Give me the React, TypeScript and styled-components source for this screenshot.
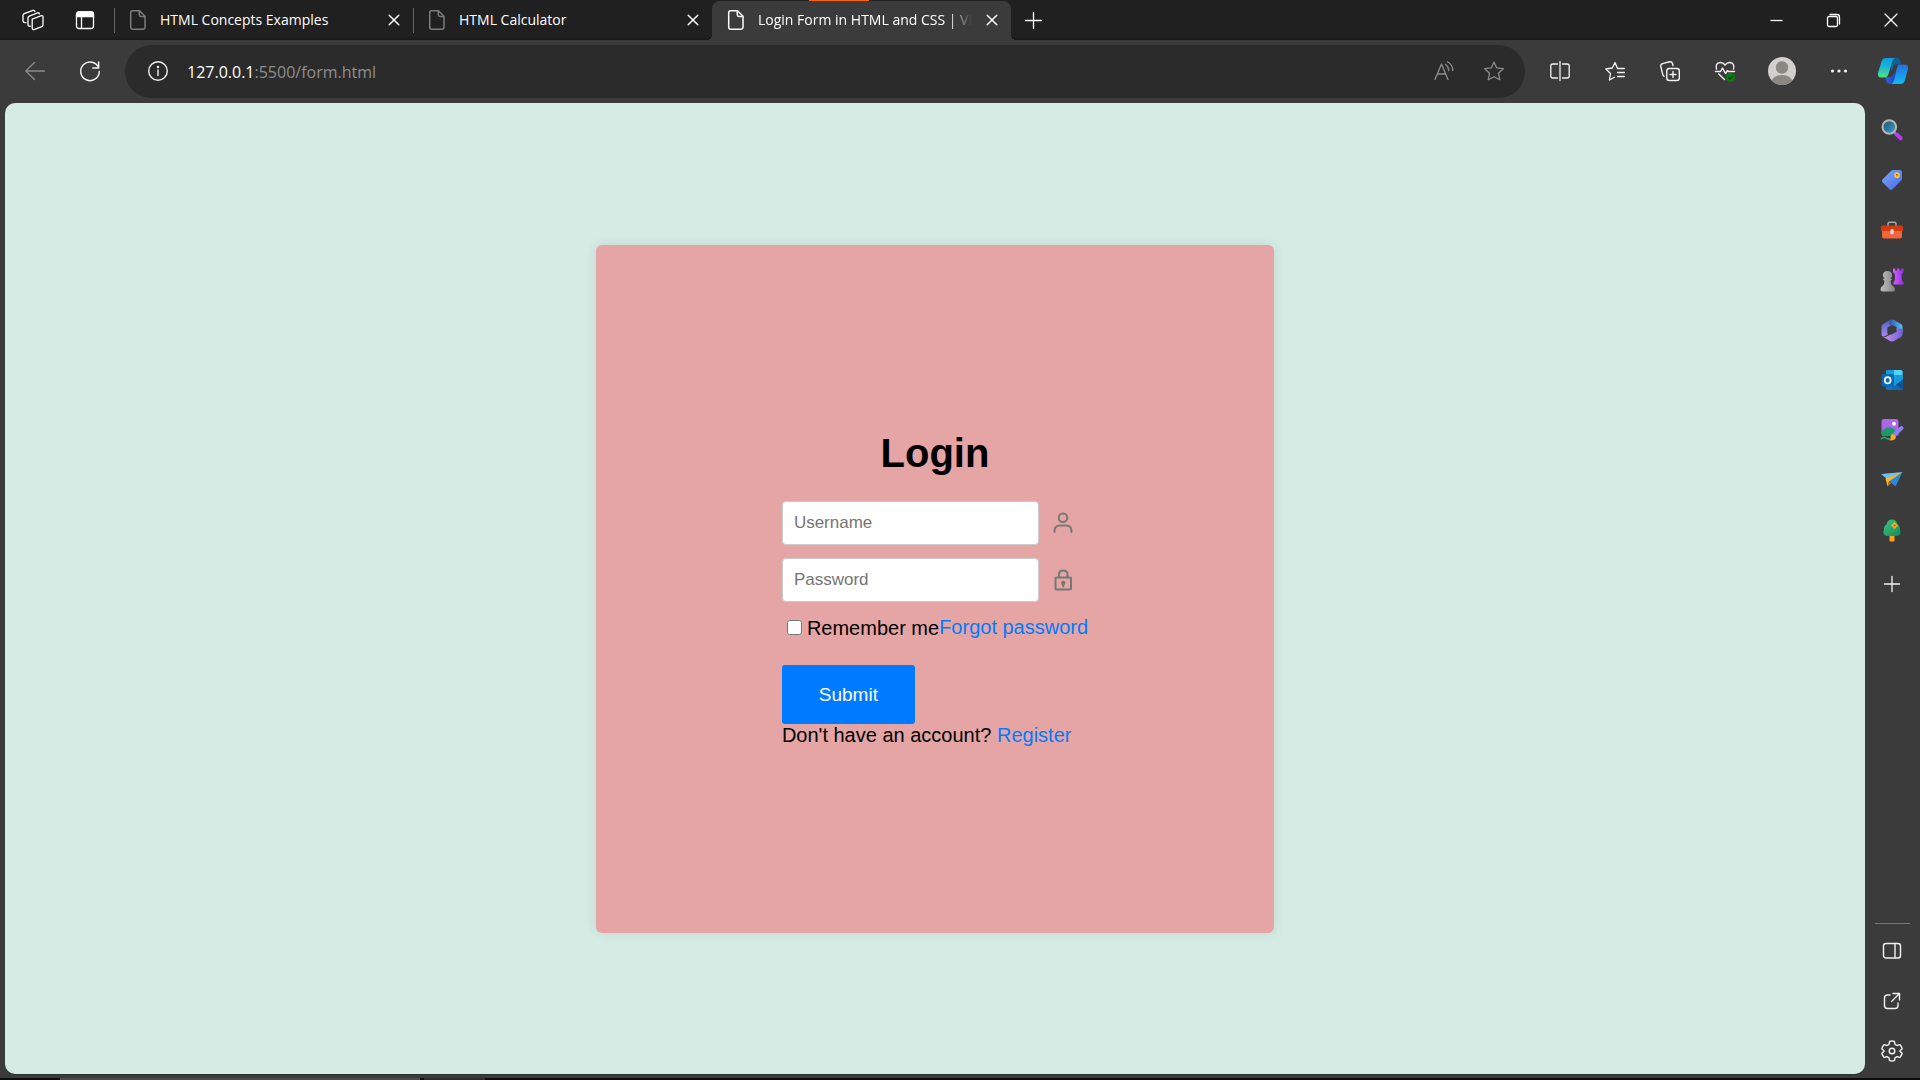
import React from "react";
import styled, { createGlobalStyle, css } from "styled-components";

const GlobalStyle = createGlobalStyle`
  *, *::before, *::after { box-sizing: border-box; }
  body { margin: 0; background: #3b3b3b; overflow: hidden; }
  button { font: inherit; color: inherit; background: none; border: 0; padding: 0; cursor: pointer; }
  a { text-decoration: none; }
  svg { display: block; flex: none; overflow: visible; }
`;

const uiFont = css`
  font-family: "Open Sans", "Noto Sans", sans-serif;
`;

const BrowserWindow = styled.div`
  ${uiFont}
  display: flex;
  flex-direction: column;
  height: 100vh;
  background: #3b3b3b;
  color: #fff;
`;

/* ---------- tab strip ---------- */

const TabStrip = styled.header`
  display: flex;
  align-items: stretch;
  height: 40px;
  flex: none;
  background: #202020;
  box-shadow: inset 0 -2px 2px -1px #161616;
`;

const StripTools = styled.div`
  display: flex;
  align-items: center;
  padding-left: 7px;
  width: 114px;
`;

const StripButton = styled.button<{ $width?: number }>`
  display: flex;
  align-items: center;
  justify-content: center;
  width: ${(p) => p.$width ?? 52}px;
  height: 40px;
`;

const TabList = styled.nav`
  display: flex;
  flex: 0 1 897px;
  min-width: 0;
`;

const Tab = styled.div<{ $active?: boolean }>`
  position: relative;
  display: flex;
  align-items: center;
  flex: 1 1 0;
  min-width: 0;
  padding: 0 12px 0 15px;
  gap: 13px;
  border-radius: 8px 8px 0 0;
  color: ${(p) => (p.$active ? "#fff" : "#7c7c7c")};
  ${(p) =>
    p.$active
      ? css`
          margin-top: 1px;
          padding-bottom: 1px;
          background: #3b3b3b;
          &::before,
          &::after {
            content: "";
            position: absolute;
            bottom: 0;
            width: 5px;
            height: 5px;
          }
          &::before {
            left: -5px;
            background: radial-gradient(circle at 0 0, transparent 5px, #3b3b3b 5px);
          }
          &::after {
            right: -5px;
            background: radial-gradient(circle at 100% 0, transparent 5px, #3b3b3b 5px);
          }
        `
      : css`
          &::before {
            content: "";
            position: absolute;
            left: 0;
            top: 8px;
            width: 1px;
            height: 25px;
            background: #666;
          }
        `}
`;

const TabTitle = styled.a<{ $fade?: boolean }>`
  flex: 1;
  min-width: 0;
  overflow: hidden;
  white-space: nowrap;
  font-size: 14px;
  line-height: 20px;
  color: #fff;
  ${(p) =>
    p.$fade &&
    css`
      mask-image: linear-gradient(90deg, #000 calc(100% - 24px), transparent);
    `}
`;

const TabClose = styled.button`
  display: flex;
  align-items: center;
  justify-content: center;
  width: 14px;
  height: 24px;
  color: #fff;
`;

const LoadMark = styled.span`
  position: absolute;
  top: -1px;
  left: 97px;
  width: 60px;
  height: 1px;
  background: #f7630c;
`;

const WindowControls = styled.div`
  display: flex;
  margin-left: auto;
`;

/* ---------- toolbar ---------- */

const Toolbar = styled.div`
  display: flex;
  align-items: center;
  height: 63px;
  flex: none;
  padding-left: 7px;
`;

const ToolButton = styled.button<{ $dim?: boolean; $width?: number }>`
  display: flex;
  align-items: center;
  justify-content: center;
  width: ${(p) => p.$width ?? 55}px;
  height: 52px;
  padding-bottom: 2px;
  color: ${(p) => (p.$dim ? "#8c8c8c" : "#f2f2f2")};
`;

const AddressBar = styled.div`
  display: flex;
  align-items: center;
  flex: 1;
  min-width: 0;
  height: 53px;
  margin: 0 7px 0 8px;
  padding: 0 6px 0 5px;
  border-radius: 27px;
  background: #2b2b2b;
`;

const Url = styled.div`
  flex: 1;
  margin-left: 2px;
  font-size: 16px;
  line-height: 24px;
  color: #8f8f8f;
  white-space: nowrap;
  overflow: hidden;
`;

const UrlHost = styled.span`
  color: #fff;
`;

/* ---------- content and side bar ---------- */

const Content = styled.div`
  display: flex;
  flex: 1;
  min-height: 0;
`;

const Viewport = styled.main`
  display: flex;
  flex: 1;
  align-items: center;
  justify-content: center;
  margin: 0 0 4px 5px;
  border-radius: 10px;
  background: #d5ece5;
  box-shadow: 0 1px 0 #303030;
  font-family: "Liberation Sans", Arial, sans-serif;
`;

const SideBar = styled.aside`
  display: flex;
  flex-direction: column;
  align-items: center;
  width: 55px;
  flex: none;
  padding: 2px 0;
`;

const SideButton = styled.button<{ $spaced?: boolean }>`
  display: flex;
  align-items: center;
  justify-content: center;
  width: 55px;
  height: 50px;
  margin-top: ${(p) => (p.$spaced ? 4 : 0)}px;
  padding-right: 2px;
  color: #f2f2f2;
`;

const SideDivider = styled.hr`
  width: 35px;
  height: 1px;
  margin: auto 0 2px;
  border: 0;
  background: #777;
`;

const TaskbarEdge = styled.footer`
  display: grid;
  grid-template-columns: 60px 360px 4px 61px 1fr;
  flex: none;
  height: 2px;
  background: #0c0c0c;
`;

const TaskbarPart = styled.span<{ $tone: string }>`
  background: ${(p) => p.$tone};
`;

/* ---------- login form ---------- */

const Card = styled.section`
  display: flex;
  align-items: center;
  justify-content: center;
  width: 678px;
  min-height: 688px;
  border-radius: 6px;
  background: #e6a5a5;
  box-shadow: 0 0 12px rgba(0, 0, 0, 0.1);
  color: #000;
  font-size: 20px;
  line-height: 23px;
`;

const LoginForm = styled.form`
  display: flex;
  flex-direction: column;
  align-items: flex-start;
`;

const Heading = styled.h1`
  align-self: center;
  margin: 0 0 25px;
  font-size: 40px;
  line-height: 46px;
`;

const Field = styled.label`
  display: flex;
  align-items: center;
  gap: 12px;
  margin-bottom: 13px;
  color: #777;
`;

const TextInput = styled.input`
  width: 257px;
  height: 44px;
  padding: 0 11px;
  border: 1px solid #ccc;
  border-radius: 4px;
  background: #fff;
  font-family: inherit;
  font-size: 17px;
  &::placeholder {
    color: #757575;
  }
`;

const Options = styled.div`
  display: flex;
  align-items: flex-start;
  margin: 1px 0 25px;
`;

const Remember = styled.label`
  display: flex;
  align-items: center;
  line-height: 24px;
`;

const Checkbox = styled.input`
  width: 15px;
  height: 15px;
  margin: 0 5px 2px 5px;
`;

const TextLink = styled.a`
  color: #007bff;
`;

const SubmitButton = styled.button`
  && {
    width: 133px;
    height: 59px;
    border-radius: 3px;
    background: #007bff;
    color: #fff;
    font-size: 19px;
  }
`;

const SignUp = styled.p`
  margin: 0;
`;

/* ---------- icons ---------- */

type GlyphProps = { size?: number; sw?: number; children: React.ReactNode };

const Glyph = ({ size = 20, sw = 1.3, children }: GlyphProps) => (
  <svg
    width={size}
    height={size}
    viewBox={`0 0 ${size} ${size}`}
    fill="none"
    stroke="currentColor"
    strokeWidth={sw}
    strokeLinecap="round"
    strokeLinejoin="round"
    aria-hidden="true"
  >
    {children}
  </svg>
);

const WorkspacesIcon = () => (
  <Glyph size={22}>
    <path d="M10.2 10.2 L19.4 6.7 Q21 6.3 21 8 V15.8 Q21 17.2 19.8 17.7 L12.6 20.4 Q10.6 21 10.2 19.2Z" />
    <path d="M8.4 17.2 Q6.3 17.6 6 15.8 V9 Q6 7.7 7.3 7.1 L15.6 3.8 Q17 3.4 17.4 4.8" />
    <path d="M4 13.6 Q1.4 14 1 12.2 V6.4 Q1 5.2 2.2 4.7 L11 1.4 Q12.6 1 13 2.5" />
  </Glyph>
);

const TabActionsIcon = () => (
  <Glyph size={20}>
    <rect x="1.5" y="2" width="17" height="16.5" rx="2.5" />
    <path d="M1.5 6.5V4.5Q1.5 2 4 2H16Q18.500 2 18.500 4.500V6.500Z" fill="currentColor" />
    <path d="M6.500 7V18" />
  </Glyph>
);

const PageIcon = () => (
  <svg width="18" height="20" viewBox="0 0 18 20" fill="none" stroke="currentColor" strokeWidth="1.5" strokeLinejoin="round" aria-hidden="true">
    <path d="M3.500 .7H10.500L16 6.300V17Q16 19.300 13.800 19.300H4Q1.700 19.300 1.700 17V2.700Q1.700 .7 3.500 .7Z" />
    <path d="M10.300 .9V4.800Q10.300 6.400 12 6.400H15.900" />
  </svg>
);

const CloseIcon = () => (
  <Glyph size={10} sw={1.5}><path d="M.2.2 9.800 9.800M9.800.2.2 9.800" /></Glyph>
);

const PlusIcon = ({ size = 16 }: { size?: number }) => (
  <Glyph size={size} sw={1.300}><path d={`M${size / 2} .5V${size - 0.5}M.5 ${size / 2}H${size - 0.5}`} /></Glyph>
);

const SearchColor = () => (
  <svg width="22" height="22" viewBox="0 0 22 22" aria-hidden="true">
    <defs>
      <linearGradient id="lens" x1="0" y1="0" x2="1" y2="1"><stop stopColor="#1e546d" /><stop offset="1" stopColor="#3f9dcc" /></linearGradient>
    </defs>
    <path d="M12.500 12.500 15.500 15.500" stroke="#8d8d8d" strokeWidth="2.500" />
    <path d="M15.700 15.500 19.700 19.200" stroke="#b53cf2" strokeWidth="4" strokeLinecap="round" />
    <circle cx="8.300" cy="8" r="6.800" fill="url(#lens)" stroke="#b5b5b5" strokeWidth="2" />
  </svg>
);

const ShoppingColor = () => (
  <svg width="22" height="22" viewBox="0 0 22 22" aria-hidden="true">
    <defs><linearGradient id="tag" x1="0" y1="0" x2="1" y2="1"><stop stopColor="#86a6ff" /><stop offset="1" stopColor="#3f68e4" /></linearGradient></defs>
    <path d="M12.500 1H19Q21 1 21 3V9.500Q21 10.800 20 11.800L11.500 20.300Q10 21.700 8.500 20.300L1.500 13.300Q.2 11.800 1.500 10.500L10 2Q11 1 12.500 1Z" fill="url(#tag)" />
    <circle cx="16" cy="6.200" r="2" fill="#553b00" stroke="#ffc928" strokeWidth="1.700" />
    <circle cx="16" cy="6.200" r=".8" fill="#ffd83c" />
  </svg>
);

const ToolsColor = () => (
  <svg width="24" height="18" viewBox="0 0 24 18" aria-hidden="true">
    <path d="M8 5V3Q8 1.200 9.800 1.200H14.200Q16 1.200 16 3V5" fill="none" stroke="#a9a9a9" strokeWidth="1.500" />
    <path d="M2 9H22V15.500Q22 17.500 20 17.500H4Q2 17.500 2 15.500Z" fill="#f0653a" />
    <path d="M2.500 4.500H21.500Q23 4.500 23 6V10H1V6Q1 4.500 2.500 4.500Z" fill="#d23c12" />
    <rect x="10.300" y="8" width="3.500" height="5.500" rx="1.700" fill="#d5d5d5" />
  </svg>
);

const GamesColor = () => (
  <svg width="24" height="24" viewBox="0 0 24 24" aria-hidden="true">
    <defs>
      <linearGradient id="rook"><stop stopColor="#d65cff" /><stop offset="1" stopColor="#9333ea" /></linearGradient>
      <linearGradient id="pawn"><stop stopColor="#bdbdbd" /><stop offset="1" stopColor="#858585" /></linearGradient>
    </defs>
    <path d="M13 .5H15.200V2.500H17V.5H19.500V2.500H21.300V.5H23.500V4L21.500 6.500L22 13L23.500 14V16.500H13.500V14L14.800 12.500L15 6.500L13 4Z" fill="url(#rook)" />
    <path d="M4.500 12.700Q2.500 12.200 3 10.700H4.800Q2.800 9 2.800 7Q3.300 3 7.500 3Q11.700 3 12.200 7Q12.200 9 10.200 10.700H12Q12.500 12.200 10.500 12.700Q10.500 16 12.500 17.700Q15 18.700 15 21.500Q15 23.500 13 23.500H2.500Q.5 23.500 .5 21.500Q.5 18.700 2.700 17.700Q4.500 16 4.500 12.700Z" fill="url(#pawn)" />
  </svg>
);

const Microsoft365Color = () => (
  <svg width="22" height="23" viewBox="0 0 22 23" aria-hidden="true">
    <defs>
      <linearGradient id="m1" x1="0" y1="0" x2="0" y2="1"><stop stopColor="#4a5fc0" /><stop offset="1" stopColor="#a98cf0" /></linearGradient>
      <linearGradient id="m2"><stop stopColor="#2f50a8" /><stop offset="1" stopColor="#58c3f5" /></linearGradient>
      <linearGradient id="m3"><stop stopColor="#d092ea" /><stop offset="1" stopColor="#6a62d8" /></linearGradient>
    </defs>
    <path d="M10 .6 2 5Q.5 6 .5 7.500V15.500Q.5 17 2 17.800L6.500 16V8.500L11.500 5.500Z" fill="url(#m1)" />
    <path d="M9 .9Q11 0 13 1L20 5Q21.500 6 21.500 7.500V13.500L15.500 11V8L8 5Z" fill="url(#m2)" />
    <path d="M21.500 10V15.500Q21.500 17 20 18L13 22Q11 23 9 22L1.500 17.500Q3.500 18.500 5.500 17.500L15.500 12.500V9Z" fill="url(#m3)" />
    <path d="M11 7 15.200 9V13L10.500 15.500 6.700 13.500V9.500Z" fill="#3b3b3b" />
  </svg>
);

const OutlookColor = () => (
  <svg width="22" height="22" viewBox="0 0 22 22" aria-hidden="true">
    <rect x="5" y="1" width="16.500" height="20" rx="1.500" fill="#1272c3" />
    <path d="M5 2.500Q5 1 6.500 1H13V10H5Z" fill="#1599e2" />
    <path d="M13 1H20Q21.500 1 21.500 2.500V10H13Z" fill="#50d5f7" />
    <path d="M13 6H21.500V14L13 17Z" fill="#169bdf" />
    <path d="M9 21H20.500Q21.500 21 21.500 20V11Z" fill="#1668af" />
    <path d="M15 15.500 21.500 11V20Z" fill="#0e4f94" />
    <rect x=".5" y="5" width="12.500" height="12.500" rx="1.500" fill="#0867b8" />
    <ellipse cx="6.700" cy="11.300" rx="2.900" ry="3.200" fill="none" stroke="#fff" strokeWidth="1.700" />
  </svg>
);

const DesignerColor = () => (
  <svg width="24" height="24" viewBox="0 0 24 24" aria-hidden="true">
    <rect x="1.500" y="1" width="17" height="17" rx="2.500" fill="#ad66e8" />
    <path d="M1.500 14Q6 8 10.500 9.500Q14 10 18.500 16Q18 18 16 18H4Q1.500 18 1.500 14Z" fill="#199b69" />
    <circle cx="14" cy="5.800" r="2" fill="#fff" />
    <path d="M1 21Q4 18.500 6 20T10 21" fill="none" stroke="#20b778" strokeWidth="1.500" />
    <path d="M14.500 16.500 21.500 10" stroke="#8e7ff5" strokeWidth="4" strokeLinecap="round" />
    <path d="M12.500 16Q15 16.500 16 19Q15 23 9.500 22.500Q11 21 10.500 19Q10.500 17 12.500 16Z" fill="#f8ad24" />
  </svg>
);

const DropColor = () => (
  <svg width="22" height="18" viewBox="0 0 22 18" aria-hidden="true">
    <path d="M0 3 21.500 1 7 9Z" fill="#65c2f5" />
    <path d="M21.500 1 14.500 15.500 7.500 9.500Z" fill="#2789dc" />
    <path d="M4.500 7.500 21.500 1 8 10.500 6.500 15.500Z" fill="#f9b52b" />
    <path d="M6.500 15.500 8 10.500 10.500 12.500Z" fill="#c56c10" />
  </svg>
);

const TreeColor = () => (
  <svg width="20" height="23" viewBox="0 0 20 23" aria-hidden="true">
    <defs><linearGradient id="leaf" x1="0" y1="0" x2="1" y2="1"><stop stopColor="#3cc486" /><stop offset="1" stopColor="#148958" /></linearGradient></defs>
    <rect x="7.500" y="15" width="5" height="7.500" rx="1" fill="#f5a51f" />
    <path d="M10 .5Q14.500 .5 15.500 5.500Q18.500 7.500 18 10.500Q20 15.500 15.500 17H4.500Q0 15.500 2 10.500Q1.500 7.500 4.500 5.500Q5.500 .5 10 .5Z" fill="url(#leaf)" />
    <path d="M12.500 4.500V8.500M10.500 6.500H14.500" stroke="#ffb51f" strokeWidth="2.500" strokeLinecap="round" />
    <circle cx="12.500" cy="6.500" r="1.100" fill="#b15a00" />
  </svg>
);

const CopilotColor = () => (
  <svg width="32" height="28" viewBox="0 0 32 28" aria-hidden="true">
    <defs>
      <linearGradient id="c1" x1="0" y1="0" x2="0" y2="1"><stop stopColor="#129cdb" /><stop offset=".45" stopColor="#17b5d8" /><stop offset="1" stopColor="#54e47e" /></linearGradient>
      <linearGradient id="c2" x1="0" y1="0" x2="0" y2="1"><stop stopColor="#256fdd" /><stop offset="1" stopColor="#15b9f4" /></linearGradient>
      <linearGradient id="c3"><stop stopColor="#2c65e0" /><stop offset="1" stopColor="#1641c7" /></linearGradient>
    </defs>
    <path d="M8 1H20Q22.500 1 23.500 4.500L24 7H20Q18 7 17 9L15 14Z" fill="#0b6296" />
    <path d="M8 20H14L20 13L17 27H13Q10 27 9 23Z" fill="url(#c3)" />
    <path d="M8.500 1H18Q16 2 15 5L11.500 17Q10.500 20.500 7 20.500H4Q.5 20.500 1 16L4.500 4.500Q5.500 1 8.500 1Z" fill="url(#c1)" />
    <path d="M21 7.500H27.500Q31.500 7.500 31 12L28 23Q27 27 23 27H14.500Q16.500 26 17.500 22L20 11Z" fill="url(#c2)" />
  </svg>
);

const sideApps: [string, React.ReactNode][] = [
  ["Search", <SearchColor />],
  ["Shopping", <ShoppingColor />],
  ["Tools", <ToolsColor />],
  ["Games", <GamesColor />],
  ["Microsoft 365", <Microsoft365Color />],
  ["Outlook", <OutlookColor />],
  ["Image Creator", <DesignerColor />],
  ["Drop", <DropColor />],
  ["Tree", <TreeColor />],
];

const tabs = [
  { title: "HTML Concepts Examples", active: false },
  { title: "HTML Calculator", active: false },
  { title: "Login Form in HTML and CSS | Vi", active: true },
];

const gearPath =
  "M8.600 1.400Q11 .6 13.400 1.400L14 4.300L16 5.500L18.800 4.600Q20.500 6.400 21.200 8.800L19 10.800V11.400L21.200 13.300Q20.500 15.700 18.800 17.500L16 16.600L14 17.800L13.400 20.700Q11 21.400 8.600 20.700L8 17.800L6 16.600L3.200 17.500Q1.500 15.700 .8 13.300L3 11.400V10.800L.8 8.800Q1.500 6.400 3.200 4.600L6 5.500L8 4.300Z";

export default function App() {
  return (
    <BrowserWindow>
      <GlobalStyle />
      <TabStrip>
        <StripTools>
          <StripButton aria-label="Workspaces"><WorkspacesIcon /></StripButton>
          <StripButton aria-label="Tab actions"><TabActionsIcon /></StripButton>
        </StripTools>
        <TabList>
          {tabs.map((tab) => (
            <Tab key={tab.title} $active={tab.active}>
              {tab.active && <LoadMark />}
              <PageIcon />
              <TabTitle href="#" $fade={tab.active}>{tab.title}</TabTitle>
              <TabClose aria-label="Close tab"><CloseIcon /></TabClose>
            </Tab>
          ))}
        </TabList>
        <StripButton $width={44} aria-label="New tab"><PlusIcon size={17} /></StripButton>
        <WindowControls>
          <StripButton $width={57} aria-label="Minimize">
            <Glyph size={13}><path d="M.5 6.500H12.500" strokeLinecap="butt" /></Glyph>
          </StripButton>
          <StripButton $width={57} aria-label="Restore">
            <Glyph size={13}>
              <rect x=".5" y="2.500" width="10" height="10" rx="1.500" />
              <path d="M3 .5H10Q12.500 .5 12.500 3V10" />
            </Glyph>
          </StripButton>
          <StripButton $width={58} aria-label="Close window">
            <Glyph size={12}><path d="M0 0 12 12M12 0 0 12" /></Glyph>
          </StripButton>
        </WindowControls>
      </TabStrip>

      <Toolbar>
        <ToolButton $dim aria-label="Back">
          <Glyph size={20}><path d="M.8 10H19.500M9.500 1.500 .8 10 9.500 18.500" /></Glyph>
        </ToolButton>
        <ToolButton aria-label="Refresh">
          <Glyph size={20} sw={1.500}>
            <path d="M18.700 7A9.300 9.300 0 1 0 19.300 10.500M18.600 1V7H12.800" />
          </Glyph>
        </ToolButton>
        <AddressBar>
          <ToolButton aria-label="Site information">
            <Glyph size={20} sw={1.400}>
              <circle cx="10" cy="10" r="9.300" />
              <path d="M10 9V14.500" />
              <circle cx="10" cy="6" r=".5" fill="currentColor" />
            </Glyph>
          </ToolButton>
          <Url role="textbox" aria-label="Address" tabIndex={0}>
            <UrlHost>127.0.0.1</UrlHost>:5500/form.html
          </Url>
          <ToolButton $dim $width={50} aria-label="Read aloud">
            <Glyph size={20}>
              <path d="M1 18.500 7.500 3 14 18.500M3.300 13H11.700M11.500 3.500Q14.500 5.500 14.800 9.500M13.500 .8Q18.500 3.500 18.800 9.500" />
            </Glyph>
          </ToolButton>
          <ToolButton $dim $width={50} aria-label="Add to favorites">
            <Glyph size={20}>
              <path d="M10 1 12.700 6.900 19.300 7.700 14.500 12.300 15.800 18.800 10 15.700 4.200 18.800 5.500 12.300 .7 7.700 7.300 6.900Z" />
            </Glyph>
          </ToolButton>
        </AddressBar>
        <ToolButton aria-label="Split screen">
          <Glyph size={20}>
            <path d="M7.500 3H3Q.8 3 .8 5V15Q.8 17 3 17H7.500M12.500 3H17Q19.200 3 19.200 5V15Q19.200 17 17 17H12.500M10 .5V19.500" />
          </Glyph>
        </ToolButton>
        <ToolButton aria-label="Favorites">
          <Glyph size={20}>
            <path d="M12.500 7.500 10 1.500 7.300 7 .8 8 5.500 12.500 4.400 19 9.500 16.200M12.500 7.500H19.500M12.500 11.500H19.500M12.500 15.500H19.500" />
          </Glyph>
        </ToolButton>
        <ToolButton aria-label="Collections">
          <Glyph size={20} sw={1.400}>
            <rect x="6.800" y="7.500" width="12.500" height="12" rx="2.500" />
            <path d="M13 10.500V16.500M10 13.500H16M4.200 15.300Q3 14.800 2.700 13.300L.8 5.500Q.4 3.300 2.500 2.700L9.500 .8Q11.800 .3 12.500 2.500L13 4.500" />
          </Glyph>
        </ToolButton>
        <ToolButton aria-label="Browser essentials">
          <Glyph size={20} sw={1.400}>
            <path d="M1.500 8Q0 2.300 5 1.500Q8 1.200 10 4Q12 1.200 15 1.500Q20 2.300 18.500 8M.5 10.500H5.500L7.500 7 10.500 12.500 12.500 9.500 13.500 10.500H19.500M3.800 13 9.500 18.500" />
            <circle cx="15.500" cy="16.500" r="4.600" fill="#0f7b10" stroke="none" />
            <path d="M13.500 16.500 15 18 17.800 15" stroke="#07480a" />
          </Glyph>
        </ToolButton>
        <ToolButton $width={60} aria-label="Profile">
          <svg width="28" height="28" viewBox="0 0 28 28" aria-hidden="true">
            <clipPath id="avatar"><circle cx="14" cy="14" r="14" /></clipPath>
            <g clipPath="url(#avatar)">
              <rect width="28" height="28" fill="#d2cfcc" />
              <circle cx="14" cy="10.500" r="6.200" fill="#8c8782" />
              <ellipse cx="14" cy="25" rx="10.500" ry="7" fill="#8c8782" />
            </g>
          </svg>
        </ToolButton>
        <ToolButton $width={54} aria-label="Settings and more">
          <Glyph size={18}>
            <g fill="currentColor" stroke="none">
              <circle cx="2.500" cy="9" r="1.600" /><circle cx="9" cy="9" r="1.600" /><circle cx="15.500" cy="9" r="1.600" />
            </g>
          </Glyph>
        </ToolButton>
        <ToolButton $width={54} aria-label="Copilot"><CopilotColor /></ToolButton>
      </Toolbar>

      <Content>
        <Viewport>
          <Card>
            <LoginForm onSubmit={(e) => e.preventDefault()}>
              <Heading>Login</Heading>
              <Field>
                <TextInput type="text" placeholder="Username" aria-label="Username" />
                <Glyph size={24} sw={2}>
                  <circle cx="12" cy="6.800" r="4.300" />
                  <path d="M3.500 21V20Q3.500 14.500 9 14.500H15Q20.500 14.500 20.500 20V21" />
                </Glyph>
              </Field>
              <Field>
                <TextInput type="password" placeholder="Password" aria-label="Password" />
                <Glyph size={24} sw={2}>
                  <rect x="4.500" y="9.500" width="15.500" height="12" rx="1" />
                  <path d="M8 9.500V6.500Q8 2.500 12.200 2.500T16.500 6.500V9.500M12.200 15.500V18.500" />
                  <circle cx="12.200" cy="15" r="1.200" fill="currentColor" />
                </Glyph>
              </Field>
              <Options>
                <Remember>
                  <Checkbox type="checkbox" />
                  Remember me
                </Remember>
                <TextLink href="#">Forgot password</TextLink>
              </Options>
              <SubmitButton type="submit">Submit</SubmitButton>
              <SignUp>
                Don't have an account? <TextLink href="#">Register</TextLink>
              </SignUp>
            </LoginForm>
          </Card>
        </Viewport>
        <SideBar>
          {sideApps.map(([name, icon]) => (
            <SideButton key={name} aria-label={name}>{icon}</SideButton>
          ))}
          <SideButton $spaced aria-label="Customize"><PlusIcon /></SideButton>
          <SideDivider />
          <SideButton aria-label="Show sidebar">
            <Glyph size={20} sw={1.400}><rect x="1.500" y="2.500" width="17" height="14.500" rx="2.500" /><path d="M13 2.500V17" /></Glyph>
          </SideButton>
          <SideButton aria-label="Open in new window">
            <Glyph size={18} sw={1.400}>
              <path d="M7 3H4.500Q1.500 3 1.500 6V13.500Q1.500 16.500 4.500 16.500H12Q15 16.500 15 13.500V11M10 1.500H16.500V8M16 2 8.500 9.500" />
            </Glyph>
          </SideButton>
          <SideButton aria-label="Settings">
            <Glyph size={22} sw={1.400}><path d={gearPath} /><circle cx="11" cy="11" r="2.800" /></Glyph>
          </SideButton>
        </SideBar>
      </Content>
      <TaskbarEdge>
        <TaskbarPart $tone="#0c0c0c" />
        <TaskbarPart $tone="#4c4a4a" />
        <TaskbarPart $tone="#0c0c0c" />
        <TaskbarPart $tone="#2e2c2c" />
      </TaskbarEdge>
    </BrowserWindow>
  );
}
